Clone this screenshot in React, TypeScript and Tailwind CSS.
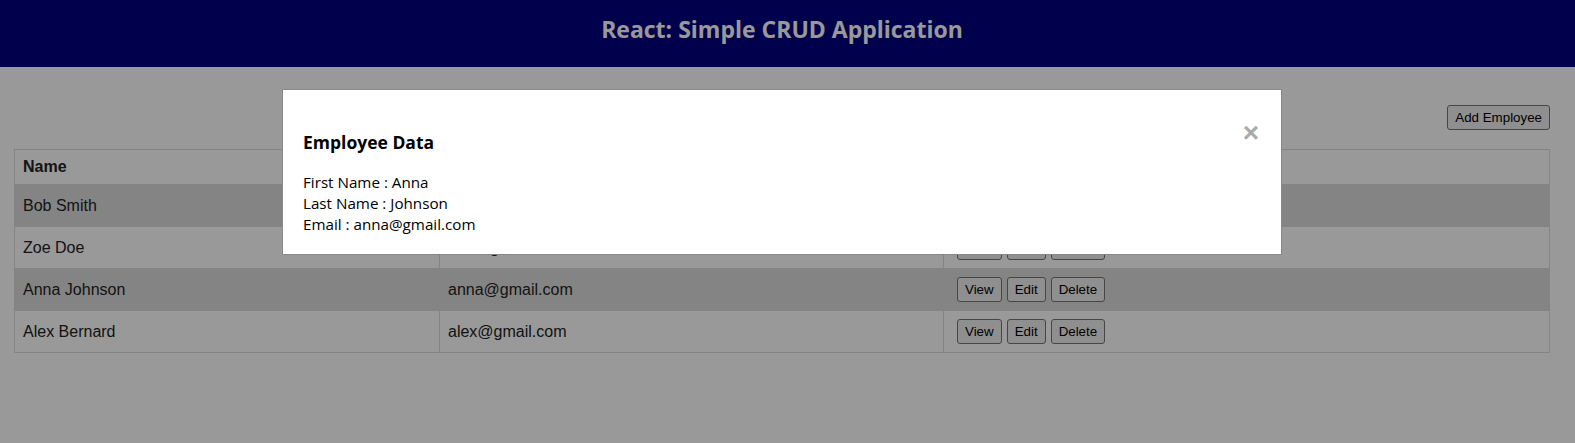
import React from "react";

type Employee = { first: string; last: string; email: string };

const employees: Employee[] = [
  { first: "Bob", last: "Smith", email: "bob@gmail.com" },
  { first: "Zoe", last: "Doe", email: "zoe@gmail.com" },
  { first: "Anna", last: "Johnson", email: "anna@gmail.com" },
  { first: "Alex", last: "Bernard", email: "alex@gmail.com" },
];

const btn =
  "bg-[#efefef] border border-[#767676] rounded-[3px] px-[7px] py-[4px] text-[13.33px] leading-[15px] text-black";

export default function App() {
  const selected = employees[2];
  return (
    <div className="relative w-[1575px] h-[443px] bg-white font-['Liberation_Sans',Arial,sans-serif] text-[#222]">
      <header className="h-[67px] bg-[#000080] pt-[14px] pr-[11px] text-center">
        <h1 className="font-['Open_Sans',sans-serif] font-bold text-[23px] leading-[30px] text-white">
          React: Simple CRUD Application
        </h1>
      </header>
      <div className="w-[1564px] px-[14px]">
        <div className="flex justify-end pt-[38px] pb-[19px]">
          <button className={btn}>Add Employee</button>
        </div>
        <table className="w-full border-collapse border border-[#ddd] text-[16px] text-left">
          <colgroup>
            <col className="w-[425px]" />
            <col className="w-[504px]" />
            <col />
          </colgroup>
          <thead>
            <tr className="bg-white">
              <th className="p-2 border border-[#ddd] font-bold leading-[18px]">Name</th>
              <th className="p-2 border border-[#ddd] font-bold leading-[18px]">Email</th>
              <th className="p-2 border border-[#ddd] font-bold leading-[18px]">Actions</th>
            </tr>
          </thead>
          <tbody>
            {employees.map((e, i) => (
              <tr key={e.email} className={i % 2 === 0 ? "bg-[#ddd]" : "bg-white"}>
                <td className="p-2 border border-[#ddd]">
                  {e.first} {e.last}
                </td>
                <td className="p-2 border border-[#ddd]">{e.email}</td>
                <td className="p-2 border border-[#ddd]">
                  <div className="flex gap-[5px] pl-[5px]">
                    <button className={btn}>View</button>
                    <button className={btn}>Edit</button>
                    <button className={btn}>Delete</button>
                  </div>
                </td>
              </tr>
            ))}
          </tbody>
        </table>
      </div>

      {/* modal overlay */}
      <div className="absolute inset-0 bg-black/40">
        <div className="w-[1564px] flex justify-center pt-[89px]">
          <div className="relative w-[1000px] h-[166px] bg-white border border-[#888] px-[20px] pt-[40px] font-['Open_Sans',sans-serif] text-black">
            <button className="absolute right-[22px] top-[29px] font-['Liberation_Sans',Arial,sans-serif] font-bold text-[28px] leading-none text-[#aaa]">
              ×
            </button>
            <h3 className="font-bold text-[17.5px] leading-[24px]">Employee Data</h3>
            <div className="mt-[18px] text-[15.2px] leading-[21px]">
              <p>First Name : {selected.first}</p>
              <p>Last Name : {selected.last}</p>
              <p>Email : {selected.email}</p>
            </div>
          </div>
        </div>
      </div>
    </div>
  );
}
